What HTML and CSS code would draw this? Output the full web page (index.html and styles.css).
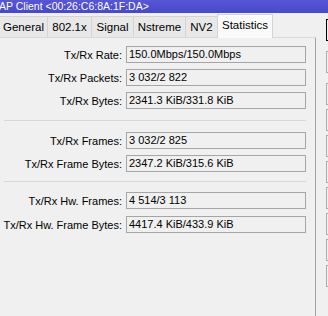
FILE: index.html
```html
<!DOCTYPE html>
<html>
<head>
<meta charset="utf-8">
<link rel="stylesheet" href="styles.css">
</head>
<body>
<div class="title"><span>AP Client &lt;00:26:C6:8A:1F:DA&gt;</span></div>
<div class="main">
  <div class="left">
    <div class="tabs">
      <div class="tab w-general">General</div>
      <div class="tab w-8021x">802.1x</div>
      <div class="tab w-signal">Signal</div>
      <div class="tab w-nstreme">Nstreme</div>
      <div class="tab w-nv2">NV2</div>
      <div class="tab active w-stats">Statistics</div>
    </div>
    <div class="panel">
      <div class="section">
        <div class="row"><div class="label">Tx/Rx Rate:</div><div class="field">150.0Mbps/150.0Mbps</div></div>
        <div class="row"><div class="label">Tx/Rx Packets:</div><div class="field">3 032/2 822</div></div>
        <div class="row"><div class="label">Tx/Rx Bytes:</div><div class="field">2341.3 KiB/331.8 KiB</div></div>
      </div>
      <div class="sep"></div>
      <div class="section">
        <div class="row"><div class="label">Tx/Rx Frames:</div><div class="field">3 032/2 825</div></div>
        <div class="row"><div class="label">Tx/Rx Frame Bytes:</div><div class="field">2347.2 KiB/315.6 KiB</div></div>
      </div>
      <div class="sep sep-second"></div>
      <div class="section last">
        <div class="row"><div class="label">Tx/Rx Hw. Frames:</div><div class="field">4 514/3 113</div></div>
        <div class="row"><div class="label">Tx/Rx Hw. Frame Bytes:</div><div class="field">4417.4 KiB/433.9 KiB</div></div>
      </div>
    </div>
  </div>
  <div class="buttons">
    <div class="btn default"></div>
    <div class="btn second"></div>
    <div class="btn third"></div>
    <div class="btn"></div>
    <div class="btn"></div>
    <div class="btn"></div>
    <div class="btn"></div>
    <div class="btn"></div>
    <div class="btn"></div>
    <div class="btn"></div>
  </div>
</div>
</body>
</html>
```
FILE: styles.css
```css
html, body {
  margin: 0;
  padding: 0;
  background: #f0f0f0;
  font-family: "Liberation Sans", Arial, sans-serif;
  font-size: 11px;
  color: #000;
  overflow: hidden;
  width: 328px;
  height: 316px;
}
.title {
  height: 13px;
  background: linear-gradient(#5656d6, #4848cc);
  color: #fff;
  overflow: hidden;
  white-space: nowrap;
}
.title span {
  display: block;
  margin-left: -1px;
  line-height: 12px;
  font-size: 10.5px;
}
.main {
  display: flex;
  height: 303px;
  overflow: hidden;
}
.left {
  width: 316px;
  flex-shrink: 0;
  display: flex;
  flex-direction: column;
}
.tabs {
  display: flex;
  align-items: flex-end;
  height: 24px;
  border-bottom: 1px solid #d9d9d9;
}
.tab {
  height: 20px;
  line-height: 20px;
  background: #e8e8e8;
  border: 1px solid #d4d4d4;
  border-bottom: none;
  border-right: none;
  text-align: center;
  font-size: 11.5px;
}
.tab:first-child { border-left: none; }
.tab.active {
  background: #fafafa;
  height: 23px;
  line-height: 21px;
  border-right: 1px solid #d4d4d4;
  margin-bottom: -1px;
}
.w-general { width: 47px; }
.w-8021x { width: 43px; }
.w-signal { width: 41px; }
.w-nstreme { width: 51px; }
.w-nv2 { width: 31px; }
.w-stats { width: 54px; }
.panel {
  flex: 1;
  border-right: 1px solid #a0a0a0;
  padding: 8px 9px 0 0;
}
.section {
  display: flex;
  flex-direction: column;
  gap: 6px;
}
.section.last { gap: 7px; }
.row {
  display: flex;
  align-items: center;
}
.label {
  width: 122px;
  text-align: right;
  padding-right: 4px;
  white-space: nowrap;
}
.field {
  flex: 1;
  height: 15px;
  line-height: 15px;
  border: 1px solid #a5a5a5;
  background: #f0f0f0;
  padding-left: 2px;
  white-space: nowrap;
}
.sep {
  height: 1px;
  background: #d8d8d8;
  margin: 11px 0 11px 4px;
}
.sep.sep-second { margin-top: 9px; margin-bottom: 10px; }
.buttons {
  margin-left: 10px;
  width: 2px;
  overflow: hidden;
  flex-shrink: 0;
  display: flex;
  flex-direction: column;
  gap: 4px;
  padding-top: 6px;
}
.btn {
  flex-shrink: 0;
  width: 20px;
  height: 20px;
  border: 1px solid #adadad;
}
.btn.default { border-color: #000; }
.btn.second, .btn.third { margin-top: 6px; }
```
